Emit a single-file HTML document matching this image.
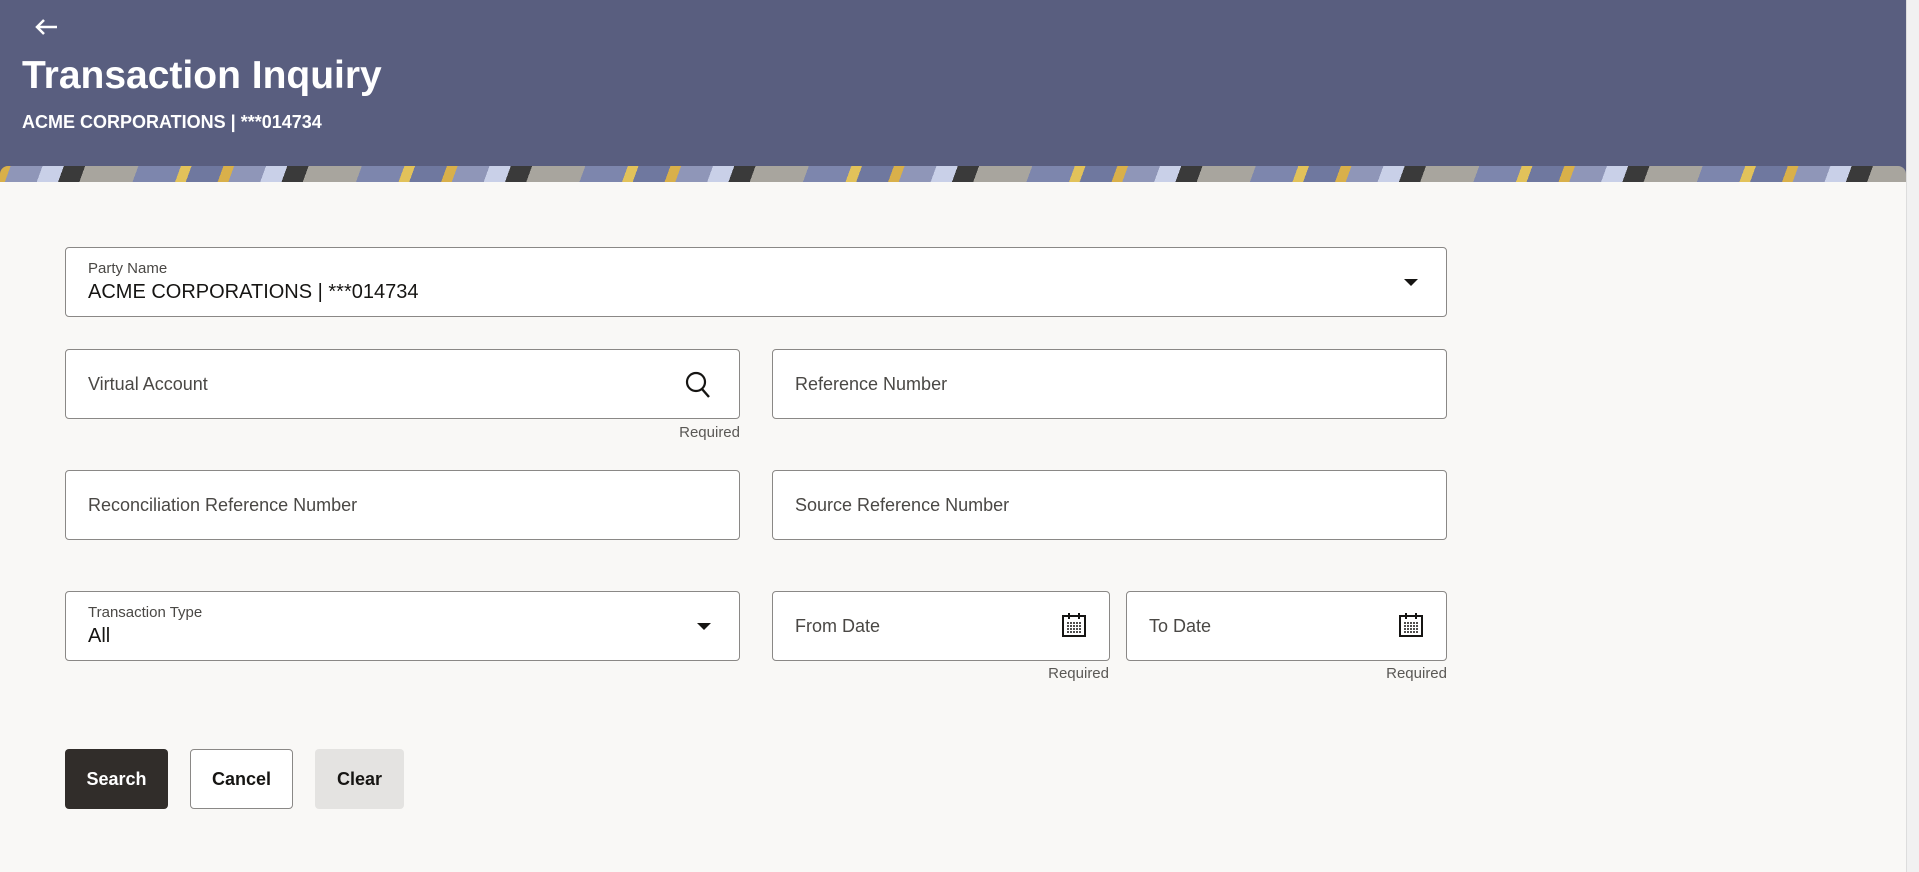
<!DOCTYPE html>
<html><head><meta charset="utf-8"><style>
*{box-sizing:border-box;margin:0;padding:0}
body{width:1919px;height:872px;background:#f9f8f6;font-family:"Liberation Sans",sans-serif;position:relative;overflow:hidden;color:#161513}
.hdr{position:absolute;left:0;top:0;width:1906px;height:182px;background:#595e7f}
.strip{position:absolute;left:0;top:166px;width:1906px;height:16px;border-radius:8px 8px 0 0;overflow:hidden;
background:repeating-linear-gradient(110deg,#d9b04a 0 10px,#8f96b8 10px 40px,#c9d0e8 40px 60px,#3a3a3a 60px 80px,#a8a59e 80px 130px,#7d86ad 130px 170px,#e2c25a 170px 180px,#6f789f 180px 210px)}
.sb{position:absolute;left:1906px;top:0;width:13px;height:872px;background:#f1f1f1;border-left:1px solid #ddd}
.t{position:absolute;color:#fff;font-weight:bold}
.box{position:absolute;background:#fff;border:1px solid #8a8886;border-radius:4px}
.lab{position:absolute;left:22px;font-size:18px;color:#4a4845}
.sm{position:absolute;left:22px;top:12px;font-size:15px;color:#4a4845}
.val{position:absolute;left:22px;top:33px;font-size:20px;color:#161513}
.req{position:absolute;font-size:15px;color:#5a5855;text-align:right}
.caret{position:absolute;width:0;height:0;border-left:7px solid transparent;border-right:7px solid transparent;border-top:7px solid #161513}
.btn{position:absolute;top:749px;height:60px;border-radius:4px;font-size:18px;font-weight:bold;display:flex;align-items:center;justify-content:center}
</style></head><body>
<div class="hdr"></div><div class="strip"></div><div class="sb"></div>
<svg style="position:absolute;left:33px;top:18px" width="26" height="18" viewBox="0 0 26 18"><path d="M24 9H4M11 2L4 9l7 7" stroke="#fff" stroke-width="2.5" fill="none"/></svg>
<div class="t" style="left:22px;top:54px;font-size:39px">Transaction Inquiry</div>
<div class="t" style="left:22px;top:112px;font-size:18px">ACME CORPORATIONS | ***014734</div>

<div class="box" style="left:65px;top:247px;width:1382px;height:70px"><div class="sm">Party Name</div><div class="val">ACME CORPORATIONS | ***014734</div><div class="caret" style="right:28px;top:31px"></div></div>

<div class="box" style="left:65px;top:349px;width:675px;height:70px"><div class="lab" style="top:24px">Virtual Account</div>
<svg style="position:absolute;right:28px;top:21px" width="26" height="28" viewBox="0 0 26 28"><circle cx="11" cy="11" r="9" stroke="#161513" stroke-width="2.2" fill="none"/><path d="M17 18l7 8" stroke="#161513" stroke-width="2.4"/></svg></div>
<div class="req" style="left:640px;width:100px;top:424px">Required</div>
<div class="box" style="left:772px;top:349px;width:675px;height:70px"><div class="lab" style="top:24px">Reference Number</div></div>

<div class="box" style="left:65px;top:470px;width:675px;height:70px"><div class="lab" style="top:24px">Reconciliation Reference Number</div></div>
<div class="box" style="left:772px;top:470px;width:675px;height:70px"><div class="lab" style="top:24px">Source Reference Number</div></div>

<div class="box" style="left:65px;top:591px;width:675px;height:70px"><div class="sm">Transaction Type</div><div class="val">All</div><div class="caret" style="right:28px;top:31px"></div></div>
<div class="box" style="left:772px;top:591px;width:338px;height:70px"><div class="lab" style="top:24px">From Date</div>
<svg style="position:absolute;right:22px;top:20px" width="26" height="26" viewBox="0 0 26 26"><rect x="2" y="4" width="22" height="20" stroke="#161513" stroke-width="2" fill="none"/><path d="M8 1v6M18 1v6" stroke="#161513" stroke-width="2"/><path d="M6 11h14M6 14h14M6 17h14M6 20h14" stroke="#161513" stroke-width="1.5" stroke-dasharray="2 1"/></svg></div>
<div class="req" style="left:1009px;width:100px;top:665px">Required</div>
<div class="box" style="left:1126px;top:591px;width:321px;height:70px"><div class="lab" style="top:24px">To Date</div>
<svg style="position:absolute;right:22px;top:20px" width="26" height="26" viewBox="0 0 26 26"><rect x="2" y="4" width="22" height="20" stroke="#161513" stroke-width="2" fill="none"/><path d="M8 1v6M18 1v6" stroke="#161513" stroke-width="2"/><path d="M6 11h14M6 14h14M6 17h14M6 20h14" stroke="#161513" stroke-width="1.5" stroke-dasharray="2 1"/></svg></div>
<div class="req" style="left:1347px;width:100px;top:665px">Required</div>

<div class="btn" style="left:65px;width:103px;background:#312d2a;color:#fff">Search</div>
<div class="btn" style="left:190px;width:103px;background:#fff;border:1px solid #8a8886">Cancel</div>
<div class="btn" style="left:315px;width:89px;background:#e4e3e1">Clear</div>
</body></html>
